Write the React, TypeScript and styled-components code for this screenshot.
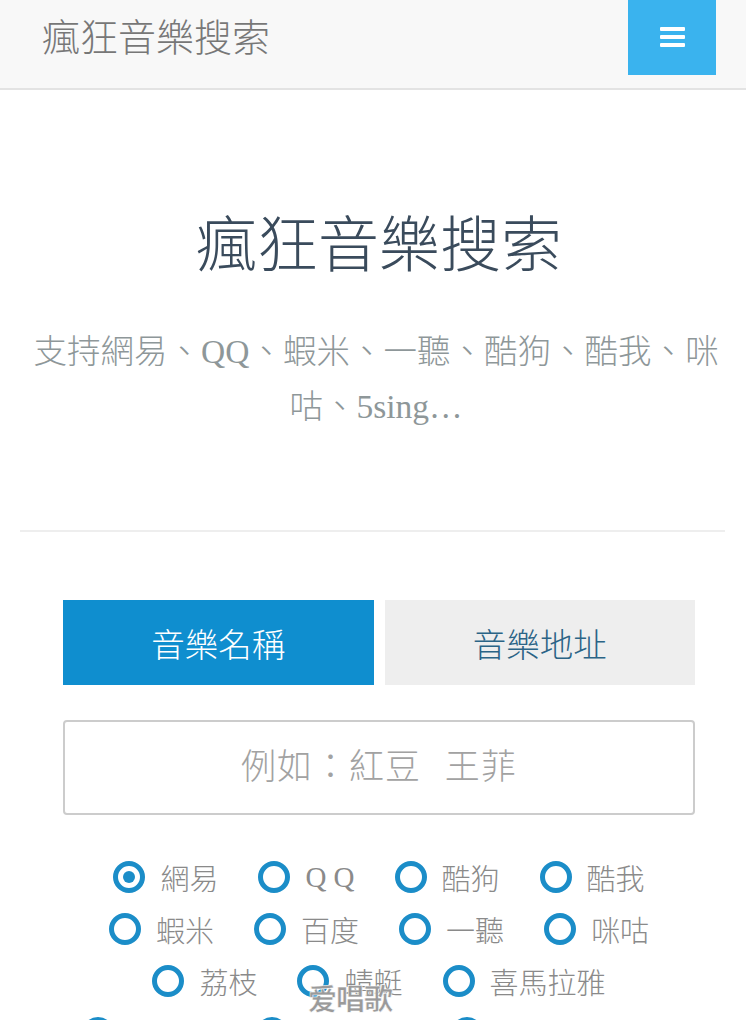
import React, { useState } from "react";
import styled, { createGlobalStyle } from "styled-components";

const GlobalStyle = createGlobalStyle`
  html, body {
    margin: 0;
    padding: 0;
    background: #ffffff;
    font-family: "Liberation Serif", "Noto Sans CJK TC", serif;
  }
  * {
    box-sizing: border-box;
  }
`;

const SOURCES = [
  ["網易", "Q Q", "酷狗", "酷我"],
  ["蝦米", "百度", "一聽", "咪咕"],
  ["荔枝", "蜻蜓", "喜馬拉雅"],
  ["音悅台", "全民K歌", "5sing原創翻唱"],
];

const App = () => {
  const [tab, setTab] = useState<number>(0);
  const [source, setSource] = useState<string>("網易");

  return (
    <Page>
      <GlobalStyle />
      <Navbar>
        <Brand>瘋狂音樂搜索</Brand>
        <MenuToggle type="button">
          <IconBar />
          <IconBar />
          <IconBar />
        </MenuToggle>
      </Navbar>

      <Hero>
        <Title>瘋狂音樂搜索</Title>
        <Lead>支持網易、QQ、蝦米、一聽、酷狗、酷我、咪咕、5sing…</Lead>
      </Hero>

      <Divider />

      <SearchForm>
        <Tabs>
          <Tab type="button" active={tab === 0} onClick={() => setTab(0)}>
            音樂名稱
          </Tab>
          <Tab type="button" active={tab === 1} onClick={() => setTab(1)}>
            音樂地址
          </Tab>
        </Tabs>
        <SearchInput placeholder="例如：紅豆 王菲" />
        <Sources>
          {SOURCES.map((row, i) => (
            <SourceRow key={i}>
              {row.map(name => (
                <SourceItem key={name} onClick={() => setSource(name)}>
                  <Radio checked={source === name} />
                  <SourceLabel>{name}</SourceLabel>
                </SourceItem>
              ))}
            </SourceRow>
          ))}
        </Sources>
      </SearchForm>

      <Watermark>爱唱歌</Watermark>
    </Page>
  );
};

const Page = styled.div`
  position: relative;
  width: 746px;
  height: 1020px;
  overflow: hidden;
`;

const Navbar = styled.header`
  display: flex;
  align-items: flex-start;
  justify-content: space-between;
  height: 90px;
  padding: 0 30px 0 42px;
  background: #f8f8f8;
  border-bottom: 2px solid #e3e3e3;
`;

const Brand = styled.div`
  margin-top: 16px;
  font-size: 38px;
  line-height: 44px;
  color: #777777;
  font-weight: 300;
`;

const MenuToggle = styled.button`
  display: flex;
  flex-direction: column;
  align-items: center;
  justify-content: center;
  gap: 4px;
  width: 88px;
  height: 75px;
  margin: 0;
  padding: 0 0 2px;
  border: none;
  background: #3ab3ee;
  cursor: pointer;
`;

const IconBar = styled.span`
  display: block;
  width: 25px;
  height: 4px;
  border-radius: 1px;
  background: #ffffff;
`;

const Hero = styled.section`
  padding: 123px 20px 0 32px;
  text-align: center;
`;

const Title = styled.h1`
  margin: 0;
  font-size: 61px;
  line-height: 68px;
  font-weight: 300;
  color: #3a4b5c;
`;

const Lead = styled.p`
  margin: 43px -8px 0 -14px;
  font-size: 33.5px;
  line-height: 55px;
  font-weight: 300;
  color: #8e9799;
`;

const Divider = styled.hr`
  margin: 96px 21px 0 20px;
  border: none;
  border-top: 2px solid #eeeeee;
`;

const SearchForm = styled.form`
  padding: 68px 51px 0 63px;
`;

const Tabs = styled.div`
  display: flex;
  gap: 11px;
`;

const Tab = styled.button<{ active: boolean }>`
  flex: 1;
  height: 85px;
  margin: 0;
  border: none;
  font-family: inherit;
  font-size: 33.5px;
  font-weight: 300;
  cursor: pointer;
  background: ${props => (props.active ? "#0f8ecf" : "#eeeeee")};
  color: ${props => (props.active ? "#ffffff" : "#2b6486")};
`;

const SearchInput = styled.input`
  display: block;
  width: 100%;
  height: 95px;
  margin-top: 35px;
  padding: 0 16px;
  border: 2px solid #cccccc;
  border-radius: 4px;
  font-family: inherit;
  font-size: 35px;
  text-align: center;
  outline: none;

  &::placeholder {
    color: #a2a2a2;
    font-weight: 300;
    letter-spacing: 1px;
    word-spacing: 14px;
  }
`;

const Sources = styled.div`
  margin-top: 36px;
`;

const SourceRow = styled.div`
  display: flex;
  justify-content: center;
  height: 52px;
  align-items: center;
`;

const SourceItem = styled.label`
  display: flex;
  align-items: center;
  gap: 15px;
  margin: 0 20px;
  cursor: pointer;
`;

const Radio = styled.span<{ checked: boolean }>`
  position: relative;
  width: 32px;
  height: 32px;
  border: 5px solid #1b8dc8;
  border-radius: 50%;
  flex-shrink: 0;

  &::after {
    content: "";
    display: ${props => (props.checked ? "block" : "none")};
    position: absolute;
    top: 5px;
    left: 5px;
    width: 12px;
    height: 12px;
    border-radius: 50%;
    background: #1b8dc8;
  }
`;

const SourceLabel = styled.span`
  font-size: 29px;
  font-weight: 300;
  color: #8a8a8a;
  white-space: nowrap;
`;

const Watermark = styled.div`
  position: absolute;
  left: 308px;
  top: 976px;
  font-family: "Noto Sans CJK SC", sans-serif;
  font-size: 29px;
  font-weight: 700;
  letter-spacing: -1px;
  color: #9a9a9a;
  -webkit-text-stroke: 0.5px #ffffff;
`;

export default App;
